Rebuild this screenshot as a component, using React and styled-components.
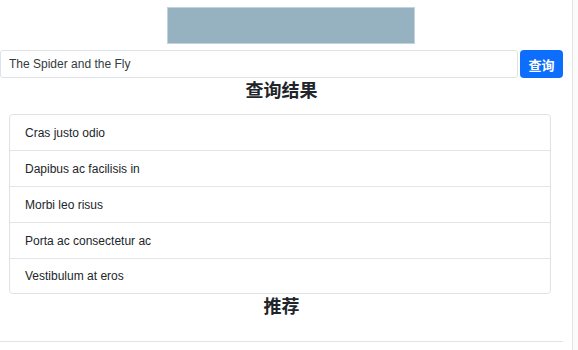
import React from "react";
import styled, { createGlobalStyle } from "styled-components";

const Global = createGlobalStyle`
  html, body { margin: 0; padding: 0; background: #fff; }
  body { font-family: "Liberation Sans", "Noto Sans CJK SC", Arial, sans-serif; color: #212529; }
  * { box-sizing: border-box; }
`;

const Page = styled.div`
  display: flex;
  width: 578px;
  height: 350px;
  overflow: hidden;
`;

const Main = styled.div`
  width: 563px;
  display: flex;
  flex-direction: column;
  padding-top: 7px;
`;

const Gutter = styled.div`
  margin-left: 9px;
  flex: 1;
  border-left: 1px solid #e4e4e4;
  background: #fbfbfb;
`;

const Banner = styled.div`
  margin-left: 167px;
  width: 248px;
  height: 37px;
  background: #96b2c0;
  border: 1px solid #c3d3db;
`;

const SearchRow = styled.div`
  display: flex;
  gap: 2px;
  margin-top: 6px;
  height: 28px;
`;

const Input = styled.input`
  width: 518px;
  height: 28px;
  border: 1px solid #dee2e6;
  border-radius: 3px;
  padding: 0 8px;
  font-family: "Liberation Sans", Arial, sans-serif;
  font-size: 12px;
  color: #343a40;
  outline: none;
  background: #fff;
`;

const Button = styled.button`
  width: 43px;
  height: 28px;
  border: none;
  border-radius: 4px;
  background: #0d6efd;
  color: #fff;
  font-family: "Noto Sans CJK SC", sans-serif;
  font-weight: 700;
  font-size: 13px;
  padding: 0;
  cursor: pointer;
`;

const Heading = styled.h4`
  margin: 0;
  height: 22px;
  line-height: 22px;
  text-align: center;
  font-family: "Noto Sans CJK SC", sans-serif;
  font-weight: 700;
  font-size: 18px;
  color: #212529;
  margin-bottom: ${(p) => p.$after || 0}px;
`;

const List = styled.ul`
  list-style: none;
  margin: 0 0 0 9px;
  padding: 0;
  width: 542px;
  border: 1px solid #dfe2e5;
  border-radius: 4px;
`;

const Item = styled.li`
  height: ${(p) => (p.$edge ? 35 : 36)}px;
  display: flex;
  align-items: center;
  padding-left: 15px;
  font-size: 12px;
  color: #212529;
  border-top: ${(p) => (p.$first ? "none" : "1px solid #e3e5e8")};
`;

const Rule = styled.div`
  margin-top: 25px;
  height: 1px;
  background: #e3e3e3;
`;

const items = [
  "Cras justo odio",
  "Dapibus ac facilisis in",
  "Morbi leo risus",
  "Porta ac consectetur ac",
  "Vestibulum at eros",
];

export default function App() {
  return (
    <>
      <Global />
      <Page>
        <Main>
          <Banner />
          <SearchRow>
            <Input defaultValue="The Spider and the Fly" />
            <Button>查询</Button>
          </SearchRow>
          <Heading $after={14}>查询结果</Heading>
          <List>
            {items.map((t, i) => (
              <Item key={t} $first={i === 0} $edge={i === 0 || i === items.length - 1}>
                {t}
              </Item>
            ))}
          </List>
          <Heading>推荐</Heading>
          <Rule />
        </Main>
        <Gutter />
      </Page>
    </>
  );
}
